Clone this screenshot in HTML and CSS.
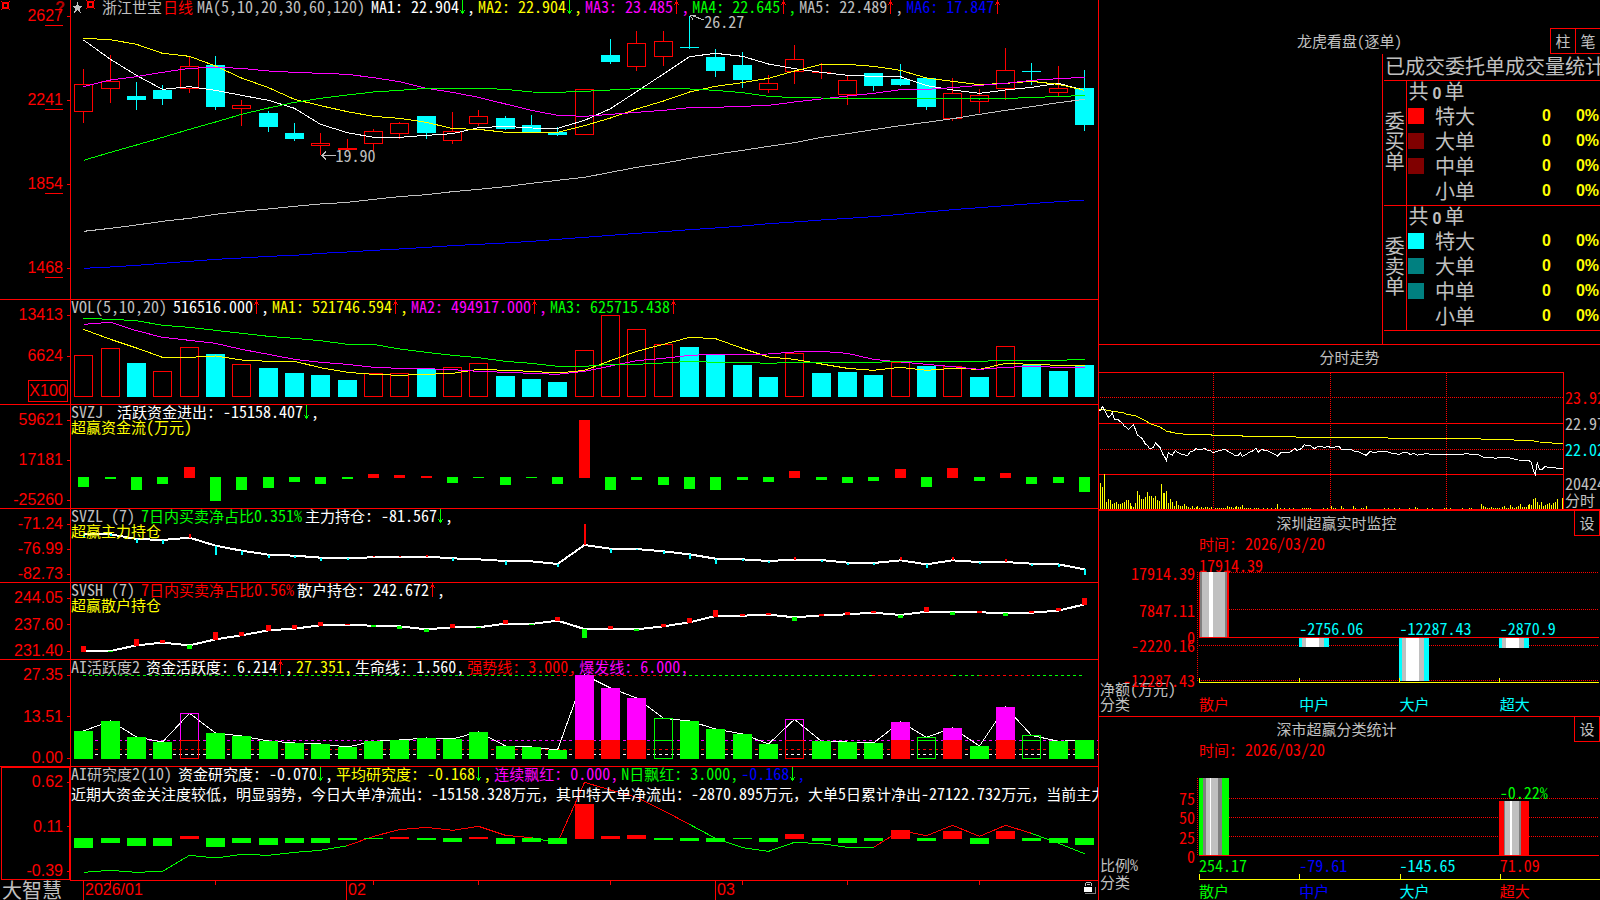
FILE: index.html
```html
<!DOCTYPE html>
<html lang="zh-CN">
<head>
<meta charset="utf-8">
<title>浙江世宝 日线 - 大智慧</title>
<link rel="stylesheet" href="styles.css">
</head>
<body>
<svg class="defs" aria-hidden="true">
  <symbol id="up" viewBox="0 0 8 15"><path d="M3 0h1v14h-1zM2 2h3v2h-3zM1 4h1v1h-1zM5 4h1v1h-1z"/></symbol>
  <symbol id="down" viewBox="0 0 8 15"><path d="M3 0h1v14h-1zM2 11h3v2h-3zM1 10h1v1h-1zM5 10h1v1h-1z"/></symbol>
  <symbol id="gear" viewBox="0 0 9 9"><path fill-rule="evenodd" d="M1 1h7v7h-7zM3 3v3h3v-3zM0 0h1v1h-1zM8 0h1v1h-1zM0 8h1v1h-1zM8 8h1v1h-1z"/></symbol>
</svg>
<main class="app">
  <section class="charts">
    <article class="panel">
      <div class="axis axis-price">
        <svg class="corner-icon red" viewBox="0 0 9 9"><use href="#gear"/></svg>
        <span class="corner-help">?</span>
        <span class="tick"><span>26<u>27</u></span></span>
        <span class="tick"><span>22<u>41</u></span></span>
        <span class="tick"><span>18<u>54</u></span></span>
        <span class="tick"><span>14<u>68</u></span></span>
      </div>
      <div class="plot">
        <svg id="price" viewBox="71 0 1027 897" preserveAspectRatio="none"></svg>
        <div class="info">
          <div class="legend">
            <span class="title-icons"><svg class="star" viewBox="0 0 12 12"><path d="M6 0L7.500 4.300H12L8.400 7L9.700 12L6 9L2.300 12L3.600 7L0 4.300H4.500Z"/></svg><svg class="gear red" viewBox="0 0 9 9"><use href="#gear"/></svg></span>
            <span class="gray name"><span class="zh">浙江世宝</span></span>
            <span class="red cycle"><span class="zh">日线</span></span>
            <span class="gray head">MA(5,10,20,30,60,120)</span>
            <span class="white item">MA1: 22.904<svg class="arrow green"><use href="#down"/></svg>,</span>
            <span class="yellow item">MA2: 22.904<svg class="arrow green"><use href="#down"/></svg>,</span>
            <span class="magenta item">MA3: 23.485<svg class="arrow red"><use href="#up"/></svg>,</span>
            <span class="green item">MA4: 22.645<svg class="arrow red"><use href="#up"/></svg>,</span>
            <span class="gray item">MA5: 22.489<svg class="arrow red"><use href="#up"/></svg>,</span>
            <span class="blue item">MA6: 17.847<svg class="arrow red"><use href="#up"/></svg></span>
          </div>
        </div>
        <span class="note note-low"><svg viewBox="0 0 15 9"><path d="M0 4.500H15M5 0.500L1 4.500L5 8.500"/></svg>19.90</span>
        <span class="note note-high"><svg viewBox="0 0 15 9"><path d="M1 1L15 6M1 1L7 1M1 1L4 6"/></svg>26.27</span>
      </div>
    </article>

    <article class="panel">
      <div class="axis">
        <span class="tick">13413</span>
        <span class="tick tick-mid">6624</span>
        <span class="unit">X100</span>
      </div>
      <div class="plot">
        <svg id="volume" viewBox="71 30 1027 312" preserveAspectRatio="none"></svg>
        <div class="info">
          <div class="legend">
            <span class="gray head">VOL(5,10,20)</span>
            <span class="white item">516516.000<svg class="arrow red"><use href="#up"/></svg>,</span>
            <span class="yellow item">MA1: 521746.594<svg class="arrow red"><use href="#up"/></svg>,</span>
            <span class="magenta item">MA2: 494917.000<svg class="arrow red"><use href="#up"/></svg>,</span>
            <span class="green item">MA3: 625715.438<svg class="arrow red"><use href="#up"/></svg></span>
          </div>
        </div>
      </div>
    </article>

    <article class="panel">
      <div class="axis"><span class="tick">59621</span><span class="tick">17181</span><span class="tick">-25260</span></div>
      <div class="plot">
        <svg id="flow" viewBox="71 345 1027 309" preserveAspectRatio="none"></svg>
        <div class="info">
          <div class="legend">
            <span class="gray head">SVZJ&nbsp;</span>
            <span class="white item"><span class="zh">活跃资金进出</span>: -15158.407<svg class="arrow green"><use href="#down"/></svg>,</span>
          </div>
          <div class="legend yellow"><span><span class="zh">超赢资金流</span>(<span class="zh">万元</span>)</span></div>
        </div>
      </div>
    </article>

    <article class="panel">
      <div class="axis"><span class="tick">-71.24</span><span class="tick">-76.99</span><span class="tick">-82.73</span></div>
      <div class="plot">
        <svg id="major" viewBox="71 657 1027 219" preserveAspectRatio="none"></svg>
        <div class="info">
          <div class="legend">
            <span class="gray head">SVZL (7)</span>
            <span class="green item">7<span class="zh">日内买卖净占比</span>0.351%</span>
            <span class="white item"><span class="zh">主力持仓</span>: -81.567<svg class="arrow green"><use href="#down"/></svg>,</span>
          </div>
          <div class="legend yellow"><span class="zh">超赢主力持仓</span></div>
        </div>
      </div>
    </article>

    <article class="panel">
      <div class="axis"><span class="tick">244.05</span><span class="tick">237.60</span><span class="tick">231.40</span></div>
      <div class="plot">
        <svg id="retail" viewBox="71 9 1027 228" preserveAspectRatio="none"></svg>
        <div class="info">
          <div class="legend">
            <span class="gray head">SVSH (7)</span>
            <span class="red item">7<span class="zh">日内买卖净占比</span>0.56%</span>
            <span class="white item"><span class="zh">散户持仓</span>: 242.672<svg class="arrow red"><use href="#up"/></svg>,</span>
          </div>
          <div class="legend yellow"><span class="zh">超赢散户持仓</span></div>
        </div>
      </div>
    </article>

    <article class="panel">
      <div class="axis"><span class="tick">27.35</span><span class="tick">13.51</span><span class="tick">0.00</span></div>
      <div class="plot">
        <svg id="active" viewBox="71 240 1027 318" preserveAspectRatio="none"></svg>
        <div class="info">
          <div class="legend">
            <span class="gray head">AI<span class="zh">活跃度</span>2</span>
            <span class="white item"><span class="zh">资金活跃度</span>: 6.214<svg class="arrow red"><use href="#up"/></svg>,</span>
            <span class="yellow item">27.351,</span>
            <span class="white item"><span class="zh">生命线</span>: 1.560,</span>
            <span class="red item"><span class="zh">强势线</span>: 3.000,</span>
            <span class="magenta item"><span class="zh">爆发线</span>: 6.000,</span>
          </div>
        </div>
      </div>
    </article>

    <article class="panel panel-selected">
      <div class="axis"><div class="axis-box"><span class="tick">0.62</span><span class="tick">0.11</span><span class="tick">-0.39</span></div></div>
      <div class="plot">
        <svg id="research" viewBox="71 561 1027 339" preserveAspectRatio="none"></svg>
        <div class="info">
          <div class="legend">
            <span class="gray head">AI<span class="zh">研究度</span>2(10)</span>
            <span class="white item"><span class="zh">资金研究度</span>: -0.070<svg class="arrow green"><use href="#down"/></svg>,</span>
            <span class="yellow item"><span class="zh">平均研究度</span>: -0.168<svg class="arrow green"><use href="#down"/></svg>,</span>
            <span class="magenta item"><span class="zh">连续飘红</span>: 0.000,</span>
            <span class="green item">N<span class="zh">日飘红</span>: 3.000,</span>
            <span class="blue item">-0.168<svg class="arrow green"><use href="#down"/></svg>,</span>
          </div>
          <p class="comment"><span class="zh">近期大资金关注度较低，明显弱势，今日大单净流出：</span>-15158.328<span class="zh">万元，其中特大单净流出：</span>-2870.895<span class="zh">万元，大单</span>5<span class="zh">日累计净出</span>-27122.732<span class="zh">万元，当前主力</span></p>
        </div>
      </div>
    </article>

    <footer class="dates">
      <span class="brand">大智慧</span>
      <div class="strip">
        <svg id="ticks" viewBox="71 0 1027 19" preserveAspectRatio="none"></svg>
        <div class="months"><span></span><time>2026/01</time><time>02</time><time>03</time></div>
        <svg class="lock" viewBox="0 0 12 12"><path fill="#808080" d="M3 5h9v7h-11v-1h10v-6z"/><path fill="#fff" d="M0 5h8v5h-8z"/><path fill="#c0c0c0" d="M2 0h5v1h-5zM1 1h1v3h-1zM7 1h1v3h-1zM3 2h3v1h-3z"/></svg>
      </div>
    </footer>
  </section>

  <aside class="side">
    <section class="orders">
      <header class="orders-head">
        <h2>龙虎看盘(逐单)</h2>
        <div class="buttons"><button type="button">柱</button><button type="button">笔</button></div>
      </header>
      <div class="stats">
        <h3 id="stats-title">已成交委托单成交量统计</h3>
        <table aria-labelledby="stats-title">
          <colgroup><col class="c-side"><col class="c-swatch"><col><col class="c-num"><col class="c-pct"></colgroup>
          <tbody>
            <tr><th class="side-name" rowspan="5" scope="rowgroup">委<br>买<br>单</th><td colspan="4" class="total">共<b>0</b>单</td></tr>
            <tr><td><i class="swatch s-red"></i></td><th scope="row">特大</th><td class="num">0</td><td class="num pct">0%</td></tr>
            <tr><td><i class="swatch s-maroon"></i></td><th scope="row">大单</th><td class="num">0</td><td class="num pct">0%</td></tr>
            <tr><td><i class="swatch s-maroon"></i></td><th scope="row">中单</th><td class="num">0</td><td class="num pct">0%</td></tr>
            <tr><td></td><th scope="row">小单</th><td class="num">0</td><td class="num pct">0%</td></tr>
          </tbody>
          <tbody>
            <tr><th class="side-name" rowspan="5" scope="rowgroup">委<br>卖<br>单</th><td colspan="4" class="total">共<b>0</b>单</td></tr>
            <tr><td><i class="swatch s-cyan"></i></td><th scope="row">特大</th><td class="num">0</td><td class="num pct">0%</td></tr>
            <tr><td><i class="swatch s-teal"></i></td><th scope="row">大单</th><td class="num">0</td><td class="num pct">0%</td></tr>
            <tr><td><i class="swatch s-teal"></i></td><th scope="row">中单</th><td class="num">0</td><td class="num pct">0%</td></tr>
            <tr><td></td><th scope="row">小单</th><td class="num">0</td><td class="num pct">0%</td></tr>
          </tbody>
        </table>
      </div>
    </section>

    <section class="intraday">
      <h2>分时走势</h2>
      <div class="intraday-body">
        <svg id="intraday" viewBox="27 99 1392 408" preserveAspectRatio="none"></svg>
        <div class="prices">
          <span class="red">23.92</span><span class="gray">22.97</span><span class="cyan">22.02</span>
          <span class="gray vol">20424</span><span class="gray zh">分时</span>
        </div>
      </div>
    </section>

    <section class="bars">
      <header class="bars-head"><h2>深圳超赢实时监控</h2><button type="button">设</button></header>
      <p class="time red"><span class="zh">时间</span>: 2026/03/20</p>
      <div class="bars-body">
        <div class="bars-axis red">
          <span class="y1">17914.39</span><span class="y2">7847.11</span><span class="y3">0</span><span class="y4">-2220.16</span><span class="y5">-12287.43</span>
        </div>
        <div class="bars-plot">
          <svg id="net" viewBox="0 0 401 109" preserveAspectRatio="none"></svg>
          <span class="value v1 red">17914.39</span>
          <span class="value v2 cyan">-2756.06</span>
          <span class="value v3 cyan">-12287.43</span>
          <span class="value v4 cyan">-2870.9</span>
        </div>
        <div class="bars-names gray"><span><span class="zh">净额</span>(<span class="zh">万元</span>)</span><span class="zh">分类</span></div>
        <div class="cats zh"><span class="red">散户</span><span class="cyan">中户</span><span class="cyan">大户</span><span class="cyan">超大</span></div>
      </div>
    </section>

    <section class="bars bars-last">
      <header class="bars-head"><h2>深市超赢分类统计</h2><button type="button">设</button></header>
      <p class="time red"><span class="zh">时间</span>: 2026/03/20</p>
      <div class="bars-body">
        <div class="bars-axis bars-axis-even red"><span>75</span><span>50</span><span>25</span><span>0</span></div>
        <div class="bars-plot">
          <svg id="share" viewBox="0 0 401 78" preserveAspectRatio="none"></svg>
          <span class="value v5 green">-0.22%</span>
        </div>
        <div class="bars-names gray"><span><span class="zh">比例</span>%</span><span class="zh">分类</span></div>
        <div class="cats">
          <div class="cat green"><span>254.17</span><span class="zh">散户</span></div>
          <div class="cat blue"><span>-79.61</span><span class="zh">中户</span></div>
          <div class="cat cyan"><span>-145.65</span><span class="zh">大户</span></div>
          <div class="cat red"><span>71.09</span><span class="zh">超大</span></div>
        </div>
      </div>
    </section>
  </aside>
</main>
<script src="app.js"></script>
</body>
</html>
```

FILE: styles.css
```css
:root {
  --red: #f00;
  --gray: #c0c0c0;
  --cjk: "Noto Sans CJK SC", sans-serif;
  --mono: "Noto Sans Mono CJK SC", "DejaVu Sans Mono", monospace;
}
* { box-sizing: border-box; }
body {
  margin: 0;
  background: #000;
  color: var(--gray);
  font: 16px/14px var(--mono);
}
h2, h3, p, table { margin: 0; font-weight: normal; }
.defs { display: none; }
.zh, h2 { font: 15px/13px var(--mono); }
.red { color: #f00; }
.green { color: #0f0; }
.white { color: #fff; }
.yellow { color: #ff0; }
.magenta { color: #f0f; }
.cyan { color: #0ff; }
.blue { color: #00f; }
.gray { color: var(--gray); }
svg { fill: currentColor; shape-rendering: crispEdges; }
svg [stroke] { vector-effect: non-scaling-stroke; }

.app {
  display: grid;
  grid-template-columns: minmax(0, 1099fr) minmax(0, 501fr);
  grid-template-rows: minmax(0, 1fr);
  height: 100vh;
  min-height: 720px;
  overflow: hidden;
}

/* stacked indicator panels */
.charts {
  display: grid;
  grid-template-rows: minmax(0, 300fr) minmax(0, 105fr) minmax(0, 104fr) minmax(0, 74fr) minmax(0, 77fr) minmax(0, 107fr) minmax(0, 114fr) minmax(0, 19fr);
  border-right: 1px solid var(--red);
  min-width: 0;
}
.panel {
  display: grid;
  grid-template-columns: 71px minmax(0, 1fr);
  grid-template-rows: minmax(0, 1fr);
  border-bottom: 1px solid var(--red);
}
.panel-selected { border-bottom: 0; }
.panel-selected .plot { border-bottom: 1px solid var(--red); }
.axis, .axis-box {
  display: flex;
  flex-direction: column;
  justify-content: space-between;
  color: var(--red);
  font: 16px/16px "Liberation Sans", sans-serif;
  text-align: right;
}
.axis {
  position: relative;
  padding-top: 7px;
  border-right: 1px solid var(--red);
}
.axis-price { padding: 8px 0 23px; }
.panel-selected .axis { padding: 0 0 1px 1px; }
.axis-box { flex: 1; border: 1px solid var(--red); padding-top: 6px; }
.axis-box .tick { margin-right: -1px; }
.tick {
  display: flex;
  justify-content: flex-end;
  align-items: center;
  gap: 4px;
}
.tick::after { content: ""; width: 3px; height: 1px; background: var(--red); }
.tick u { display: inline-block; height: 18px; margin-bottom: -2px; text-decoration: none; border-bottom: 1px solid var(--red); }
.tick-mid { margin-top: 9px; }
.unit {
  align-self: flex-end;
  margin: 0 2px 2px 0;
  width: 40px;
  border: 1px solid var(--red);
  line-height: 20px;
  text-align: center;
}
.corner-icon { position: absolute; left: 1px; top: 1px; width: 9px; height: 9px; }
.corner-help { position: absolute; right: 5px; top: 0; font-weight: bold; opacity: .7; }

.plot {
  position: relative;
  display: grid;
  grid-template: minmax(0, 1fr) / minmax(0, 1fr);
  overflow: hidden;
}
.plot > svg, .info { grid-area: 1 / 1; min-width: 0; min-height: 0; }
.plot > svg { width: 100%; height: 100%; }
.legend { display: flex; height: 15px; line-height: 13px; white-space: pre; }
.item { margin-right: 3px; }
.head { margin-right: 6px; }
.arrow { width: 8px; height: 15px; vertical-align: top; }
.title-icons { display: flex; gap: 3px; padding-left: 1px; }
.star { width: 11px; height: 11px; margin-top: 2px; }
.gear { width: 9px; height: 9px; }
.name { margin-left: 7px; }
.cycle { margin: 0 4px 0 1px; }
.comment { margin-top: 4px; color: #fff; line-height: 15px; white-space: nowrap; }
.note { position: absolute; display: flex; color: var(--gray); }
.note svg { width: 15px; height: 9px; fill: none; stroke: currentColor; margin-top: 3px; }
.note-low { left: 24.3%; top: 148px; }
.note-high { left: 60.2%; top: 14px; }
.note-high svg { margin-top: 0; }

.dates { display: grid; grid-template-columns: 71px minmax(0, 1fr); grid-template-rows: minmax(0, 1fr); }
.brand { padding-left: 2px; font: 20px/18px var(--cjk); color: var(--gray); }
.strip { display: grid; grid-template-columns: minmax(0, 1fr) 14px; grid-template-rows: minmax(0, 1fr); }
.strip > #ticks, .months { grid-area: 1 / 1 / 2 / 3; min-width: 0; }
#ticks { width: 100%; height: 100%; }
.months {
  display: grid;
  grid-template-columns: 12fr 263fr 369fr 383fr;
  font: 16px/18px "Liberation Sans", sans-serif;
  color: var(--red);
}
.months time { border-left: 1px solid var(--red); padding-left: 1px; }
.lock { grid-area: 1 / 2; width: 12px; height: 12px; margin-top: 1px; }

/* side column */
.side {
  display: grid;
  grid-template-rows: minmax(0, 345fr) minmax(0, 166fr) minmax(0, 206fr) minmax(0, 183fr);
  grid-template-columns: minmax(0, 1fr);
}
.side > section { min-height: 0; min-width: 0; overflow: hidden; }
h2 { text-align: center; color: var(--gray); }
button {
  width: 26px;
  height: 25px;
  padding: 0;
  border: 1px solid var(--red);
  background: #000;
  color: var(--gray);
  font: 15px/20px var(--cjk);
}
.orders { display: flex; flex-direction: column; border-bottom: 1px solid var(--red); }
.orders-head { display: grid; padding-top: 28px; }
.orders-head > * { grid-area: 1 / 1; }
.orders-head h2 { line-height: 25px; }
.buttons { display: flex; justify-content: flex-end; }
.buttons button { width: 25px; height: 26px; border-right: 0; }
.stats {
  flex: 1;
  align-self: flex-end;
  width: 218px;
  border-left: 1px solid var(--red);
  padding-left: 1px;
  overflow: hidden;
}
h3 { height: 26px; padding-left: 1px; font: 20px/23px var(--cjk); white-space: nowrap; }
table { width: 100%; table-layout: fixed; border-collapse: collapse; font: 20px/18px var(--cjk); }
.c-side { width: 22px; }
.c-swatch { width: 29px; }
.c-num { width: 50px; }
.c-pct { width: 49px; }
tbody { border-top: 1px solid var(--red); border-bottom: 1px solid var(--red); }
tr { height: 25px; }
td, th { padding: 0 0 4px; font-weight: normal; text-align: left; }
.side-name { border-right: 1px solid var(--red); line-height: 20px; text-align: center; }
.total { padding-left: 2px; }
.total b { margin: 0 3px 0 4px; font: bold 16px/10px "Liberation Sans", sans-serif; }
.swatch { display: block; width: 16px; height: 16px; margin-left: 1px; }
.s-red { background: #f00; }
.s-maroon { background: #800000; }
.s-cyan { background: #0ff; }
.s-teal { background: #008080; }
.num { color: #ff0; font: bold 16px/18px "Liberation Sans", sans-serif; text-align: right; }
.pct { padding-right: 1px; }

.intraday { display: flex; flex-direction: column; border-bottom: 2px solid var(--red); }
.intraday h2 { height: 27px; line-height: 23px; }
.intraday-body { flex: 1; display: grid; grid-template-columns: minmax(0, 1fr) 36px; grid-template-rows: minmax(0, 1fr); min-height: 0; }
#intraday { width: 100%; height: 100%; border: solid var(--red); border-width: 1px 1px 0 0; }
.prices { display: flex; flex-direction: column; gap: 12px; padding: 18px 0 0 1px; overflow: hidden; white-space: nowrap; }
.prices .vol { margin-top: 8px; }
.prices .zh { margin-top: -9px; }

.bars { display: flex; flex-direction: column; border-bottom: 1px solid var(--red); }
.bars-last { border-bottom: 0; }
.bars-head { display: flex; }
.bars-head h2 { flex: 1; line-height: 24px; }
.bars-head button { border-top: 0; }
.time { padding-left: 100px; height: 36px; line-height: 14px; }
.bars-body {
  flex: 1;
  display: grid;
  grid-template-columns: 100px minmax(0, 1fr);
  grid-template-rows: minmax(0, 1fr) 35px;
  min-height: 0;
}
.bars-last .bars-body { grid-template-rows: minmax(0, 1fr) 44px; }
.bars-axis { position: relative; }
.bars-axis span { position: absolute; right: 4px; }
.y1 { top: -6px; }
.y2 { top: 28%; }
.y3 { top: 53%; }
.y4 { top: 61%; }
.y5 { top: 93%; }
.bars-axis-even { display: flex; flex-direction: column; justify-content: space-between; padding: 13px 4px 0 0; margin-bottom: -7px; text-align: right; }
.bars-axis-even span { position: static; }
.bars-plot { position: relative; min-height: 0; }
.bars-plot svg { display: block; width: 100%; height: 100%; overflow: visible; }
.value { position: absolute; }
.v1 { left: 0; bottom: 100%; }
.v2, .v3, .v4 { bottom: 42%; }
.v2 { left: 25%; }
.v3 { left: 50%; }
.v4, .v5 { left: 75%; }
.v5 { top: 9%; }
.bars-names { display: flex; flex-direction: column; padding-left: 1px; gap: 2px; }
.bars-last .bars-names { padding-top: 1px; gap: 4px; }
.cats { display: grid; grid-template-columns: repeat(4, 1fr); padding-top: 16px; }
.bars-last .cats { padding-top: 2px; }
.cat { display: flex; flex-direction: column; }
.cat > span:first-child::after {
  content: "";
  display: block;
  height: 5px;
  margin: 2px 0 4px;
  border: solid #ff0;
  border-width: 0 0 1px 1px;
}
```

FILE: app.js
```js
const NS = 'http://www.w3.org/2000/svg';
const R = '#f00', C = '#0ff', G = '#0f0', W = '#fff', Y = '#ff0', M = '#f0f', S = '#c0c0c0', B = '#00f';
const X = i => Math.round(83.2 + 26.34 * i);

function add(svg, tag, attrs) {
  const el = document.createElementNS(NS, tag);
  for (const k in attrs) el.setAttribute(k, attrs[k]);
  svg.appendChild(el);
}
const box = (s, x, y, w, h, fill) => add(s, 'rect', { x, y, width: w, height: h, fill });
const frame = (s, x, y, w, h, stroke) => add(s, 'rect', { x: x + .5, y, width: w - 1, height: h, fill: 'none', stroke });
const path = (s, d, stroke, extra) => add(s, 'path', Object.assign({ d, fill: 'none', stroke }, extra));
const series = (s, ys, color, extra, from = 0) =>
  path(s, 'M' + ys.map((y, k) => (X(k + from) + .5) + ' ' + y).join('L'), color, extra);
const $ = id => document.getElementById(id);

/* daily candles: direction, high, body top, body bottom, low */
const price = $('price');
[
  'r 207 253 334 369', 'r 165 244 265 309', 'c 246 288 300 330', 'c 255 270 297 315', 'r 170 199 265 279',
  'c 168 195 321 330', 'r 300 317 325 378', 'c 333 339 381 396', 'c 369 399 417 423', 'r 399 430 437 466',
  'r 417 445 448 454', 'r 387 394 431 456', 'r 366 370 401 417', 'c 348 348 399 417', 'r 336 394 422 432',
  'r 330 349 371 378', 'c 348 354 387 390', 'c 345 375 396 396', 'c 381 396 405 408', 'r 268 268 403 403',
  'c 117 165 186 192', 'r 93 130 199 213', 'r 93 124 170 198', 'c 48 141 144 147', 'c 147 171 213 231',
  'c 156 195 240 264', 'r 225 250 268 279', 'r 135 178 214 252', 'r 189 216 218 237', 'r 228 241 283 315',
  'c 219 219 258 273', 'c 192 237 255 258', 'c 234 234 321 330', 'r 234 280 356 363', 'r 267 286 304 339',
  'r 144 211 265 300', 'c 189 213 216 255', 'r 198 265 277 288', 'c 210 264 375 393'
].forEach((row, i) => {
  const p = row.split(' '), [hi, top, bot, lo] = p.slice(1).map(Number), x = X(i), col = p[0] === 'r' ? R : C;
  box(price, x, hi, 1, top - hi, col);
  box(price, x, bot, 1, lo - bot, col);
  if (p[0] === 'r') frame(price, x - 9, top, 19, bot - top, R);
  else box(price, x - 9, top, 19, bot - top, C);
});
series(price, [694,685,675,664,655,643,634,627,619,612,607,598,590,584,575,568,560,550,541,532,517,502,490,475,463,451,439,428,412,401,389,377,367,356,343,331,320,308,298], S);
series(price, [805,801,796,790,784,778,774,769,766,760,756,751,747,742,737,733,729,724,718,712,706,700,695,689,684,678,671,666,660,655,650,643,636,629,623,617,611,605,600], B);
series(price, [120,178,226,268,260,271,286,301,325,373,398,412,412,406,401,383,379,384,385,361,326,275,222,170,160,169,192,206,217,226,229,230,257,270,280,270,262,250,271], W);
series(price, [115,119,133,160,169,198,234,263,298,317,335,349,355,367,386,388,397,398,397,377,354,327,303,276,259,248,235,213,193,193,199,211,234,244,254,250,244,253,271], Y);
series(price, [260,240,230,217,205,202,205,213,217,220,223,233,245,265,277,292,312,331,346,349,343,337,331,323,322,319,316,306,297,288,280,269,268,263,256,250,241,236,232], M);
series(price, [481,457,435,412,388,366,343,324,307,295,285,276,271,265,265,265,268,276,277,274,270,266,265,267,271,278,289,293,294,295,295,295,297,296,297,296,292,290,286], G);

/* volume */
const volume = $('volume');
'r196 r175 c219 r244 r172 c192 r223 c234 c249 c255 c270 r250 r250 c237 r232 r220 c258 c267 c276 r181 r76 r118 r163 c171 c195 c225 c261 r190 c249 c246 c255 r217 c228 r229 c261 r169 c225 c243 c225'
  .split(' ').forEach((v, i) => {
    const top = +v.slice(1), x = X(i) - 9;
    if (v[0] === 'r') frame(volume, x, top, 19, 319.5 - top, R);
    else box(volume, x, top, 19, 321 - top, C);
  });
series(volume, [118,148,174,202,202,198,210,214,214,233,247,253,256,253,250,238,241,244,249,241,212,184,163,142,146,175,201,208,222,235,241,232,241,235,238,220,223,226,226], Y);
series(volume, [103,97,122,142,151,160,178,193,208,217,223,232,235,236,239,244,247,250,253,244,228,212,205,196,193,193,192,186,184,190,208,216,223,230,238,232,229,232,232], M);
series(volume, [85,88,92,106,112,121,130,139,145,152,163,163,177,187,196,203,214,220,229,229,223,223,219,214,217,217,220,217,217,217,217,214,214,214,214,211,211,211,208], G);

/* bars hanging from, or standing on, a zero line */
function signed(svg, text, low, high, width) {
  text.split(' ').forEach((v, i) => {
    const y = +v.slice(1), x = X(i) - (width - 1) / 2;
    if (v[0] === 'r') box(svg, x, y, width, high - y, R);
    else box(svg, x, low, width, y - low, G);
  });
}
signed($('flow'), 'g591 g567 g600 g582 r531 g633 g600 g594 g576 g582 g567 r552 r555 r558 g579 g564 g585 g564 g582 r390 g600 g570 g585 g597 g600 g570 g576 r543 g570 g579 g573 r537 g591 r534 g573 r549 g582 g579 g606', 561, 564, 11);

/* major holders */
const major = $('major');
const majorY = [733,733,747,750,743,767,782,794,797,803,804,802,800,800,805,808,813,814,822,765,776,777,784,793,806,808,813,809,810,818,819,811,823,811,816,816,821,823,838];
series(major, majorY, W, { 'stroke-width': 2 });
'742 738 759 762 732 795 795 804 804 813 809 798 797 795 813 - 825 - 831 702 789 780 792 807 822 812 819 801 816 825 825 801 834 801 822 807 828 831 855'
  .split(' ').forEach((v, i) => {
    if (v === '-') return;
    const y = majorY[i], t = +v;
    if (t < y) box(major, X(i), t, 2, y - t, R);
    else box(major, X(i), y, 2, t - y, C);
  });

/* retail holders */
const retail = $('retail');
series(retail, [213,213,196,188,196,178,166,151,146,136,135,137,139,148,142,142,131,132,122,147,147,148,139,127,108,107,104,112,106,103,98,105,95,97,97,99,98,92,73], W, { 'stroke-width': 2 });
'r198-216 g213-216 r177-198 r180-189 g195-207 r156-180 r156-168 r135-153 r135-147 r126-138 r132-135 g135-141 g138-147 g147-156 r132-144 g141-144 r120-132 g132-135 r111-123 g147-174 r138-147 g147-153 r132-141 r114-129 r90-111 r102-108 r99-105 g111-123 r102-108 r96-105 r93-99 g105-114 r81-96 g96-105 r93-99 g99-108 r93-99 r84-93 r54-75'
  .split(' ').forEach((v, i) => {
    const [a, b] = v.slice(1).split('-').map(Number);
    box(retail, X(i) - 2, a, 5, b - a, v[0] === 'r' ? R : G);
  });

/* activity: g filled, m burst, p hollow burst, h hollow */
const active = $('active');
const act = 'g453 g423 g471 g486 p400 g459 g468 g483 g489 g492 g501 g484 g480 g474 g477 g456 g498 g501 g510 m285 m324 m354 h415 g423 g447 g462 g492 p418 g484 g486 g489 m426 h472 m444 g498 m381 h466 g484 g480'.split(' ');
const dash = { 'stroke-dasharray': '3 3' };
path(active, 'M83 286H1084', G, dash);
path(active, 'M557 286H661M872 286H953M979 286H1032', '#000');
path(active, 'M557 286H661M872 286H953M979 286H1032', R, dash);
path(active, 'M83 481H1098', M, dash);
path(active, 'M83 508H1098', R, dash);
path(active, 'M83 523H1098', W, dash);
series(active, act.map(v => +v.slice(1)), W);
act.forEach((v, i) => {
  const y = +v.slice(1), x = X(i) - 9, k = v[0];
  if (k === 'g') box(active, x, y, 19, 537 - y, G);
  if (k === 'm') { box(active, x, y, 19, 480 - y, M); box(active, x, 480, 19, 57, R); }
  if (k === 'p') { frame(active, x, y, 19, 481.5 - y, M); frame(active, x, 481.5, 19, 54, R); }
  if (k === 'h') { frame(active, x, y, 19, 481.5 - y, G); frame(active, x, 481.5, 19, 54, G); }
});

/* research */
const research = $('research');
const res = [877,871,877,874,826,834,823,826,817,811,797,769,749,742,751,739,766,773,789,607,630,652,692,733,775,803,814,787,791,802,802,752,767,736,769,736,760,790,821];
[[0, 10, G], [10, 17, R], [17, 18, G], [18, 23, R], [23, 30, G], [30, 36, R], [36, 38, G]]
  .forEach(([a, b, c]) => series(research, res.slice(a, b + 1), c, {}, a));
signed(research, 'g804 g789 g798 g798 r768 g801 g789 g795 g789 g789 g780 g777 r771 g780 g786 r771 g792 g786 g792 r672 r768 r765 g780 g783 g786 g777 g786 r762 g783 g789 g783 r750 g783 r753 g792 r753 g783 g789 g795', 774, 777, 19);

/* week marks on the date strip */
[1, 5, 11, 15, 20, 25, 29, 34].forEach(i => box($('ticks'), X(i), 0, 1, 4, R));

/* intraday */
const intra = $('intraday');
const dots = { 'stroke-dasharray': '1 1' };
path(intra, 'M370 99V507M721 99V507M1069 99V507M30 172H1419M30 328H1419', R, dots);
path(intra, 'M27 250.500H1419M27 403.500H1419', R);
const vols = '31:429 37:441 43:402 49:486 55:477 61:480 67:492 73:489 79:486 85:492 91:492 97:489 103:486 109:480 115:480 121:489 124:498 130:501 136:489 142:453 148:465 154:477 160:477 166:471 172:456 178:468 184:468 190:474 196:468 202:480 208:483 214:432 220:459 223:459 229:453 235:489 241:477 247:486 253:498 259:483 265:495 271:498 277:498 283:492 289:498 295:501 301:504 307:498 313:504 319:501 322:498 328:504 334:501 340:504 346:501 352:501 358:504 364:501 376:504 382:504 388:504 394:504 400:504 406:504 412:498 418:501 424:501 430:504 436:501 439:498 445:501 451:501 457:495 463:504 469:504 475:504 481:504 493:504 499:504 505:504 520:504 532:504 544:504 556:504 562:492 571:504 583:504 598:504 610:504 637:504 643:504 649:504 655:504 661:504 700:504 712:504 724:498 730:504 736:504 754:498 760:504 790:498 796:504 814:504 820:504 829:498 883:504 895:504 913:504 928:504 958:504 976:501 982:504 1012:504 1027:504 1063:504 1069:504 1081:504 1117:504 1138:504 1144:504 1174:492 1180:498 1186:501 1192:504 1198:504 1204:501 1210:504 1216:504 1222:504 1228:504 1237:501 1243:498 1249:504 1255:504 1261:495 1267:501 1273:504 1279:501 1285:498 1291:492 1297:501 1303:501 1309:501 1315:495 1318:492 1324:495 1330:477 1336:474 1342:486 1348:495 1354:486 1360:498 1366:495 1372:492 1378:489 1384:495 1390:489 1396:486 1402:477 1416:474';
vols.split(' ').forEach(v => {
  const [x, y] = v.split(':').map(Number);
  box(intra, x - 1, y, 3, 507 - y, Y);
});
path(intra, 'M27 210L45 209L62 213L98 218L112 223L136 227L158 238L185 253L208 260L229 273L258 280L290 283L363 284L366 286L456 287L458 289L617 290L620 292L893 293L895 295L1172 296L1175 298L1270 299L1275 301L1328 302L1348 306L1382 308L1390 310L1419 311', Y);
path(intra, 'M27 213L33 210L37 199L44 212L50 224L56 232L61 228L67 217L73 237L84 238L90 245L96 248L103 259L109 262L116 269L122 262L130 254L136 268L142 285L151 291L158 297L167 314L173 316L178 326L190 323L197 308L203 316L210 322L215 334L220 346L224 350L229 361L235 338L241 343L247 346L256 331L262 337L270 341L276 344L293 346L301 335L310 333L319 325L325 329L334 329L343 325L352 331L362 332L368 337L380 335L388 331L407 329L415 335L424 339L434 346L445 346L451 338L457 349L467 344L478 337L488 333L498 325L504 337L515 328L523 331L532 331L541 337L551 341L562 348L571 339L580 337L598 338L607 331L614 325L620 331L630 328L637 323L643 314L649 317L661 317L673 326L684 320L694 319L706 323L712 318L721 322L733 323L739 319L748 320L754 328L760 330L785 329L794 335L808 336L820 342L829 346L841 334L853 338L868 334L889 334L898 338L917 341L927 343L938 338L952 338L960 343L972 341L982 346L992 343L1010 341L1025 343L1070 344L1120 343L1130 340L1140 343L1165 344L1180 352L1205 352L1215 355L1235 352L1255 353L1285 360L1316 361L1324 367L1330 392L1336 403L1342 367L1348 388L1356 388L1365 379L1382 384L1390 381L1400 385L1419 385', W);

/* category columns with a metallic sheen */
function column(svg, x, y, h, stripes) {
  stripes.forEach(([w, c]) => { box(svg, x, y, w, h, c); x += w; });
}
const D = '#808080';
const net = $('net');
path(net, 'M-1.500 0V109M0 .5H400M0 37.500H400M0 73.500H400M0 108.500H400', R, dots);
path(net, 'M0 65.500H400', R);
const cool = [[3, C], [4, S], [13, W], [5, S], [5, C]];
column(net, 0, 0, 65, [[1, R], [2, D], [7, S], [4, W], [12, S], [2, D], [2, R]]);
column(net, 100, 66, 9, cool);
column(net, 200, 66, 43, cool);
column(net, 300, 66, 10, cool);
path(net, 'M.5 106V110.500H400M100.500 106V110M200.500 106V110M300.500 106V110', Y);

const share = $('share');
path(share, 'M-1.500 0V78M0 20.500H400M0 39.500H400M0 58.500H400', R, dots);
path(share, 'M0 77.500H400', R);
column(share, 0, 0, 77, [[4, G], [3, D], [4, S], [1, W], [7, S], [4, D], [7, G]]);
column(share, 300, 23, 54, [[5, R], [1, D], [5, S], [2, W], [7, S], [2, D], [8, R]]);
```
